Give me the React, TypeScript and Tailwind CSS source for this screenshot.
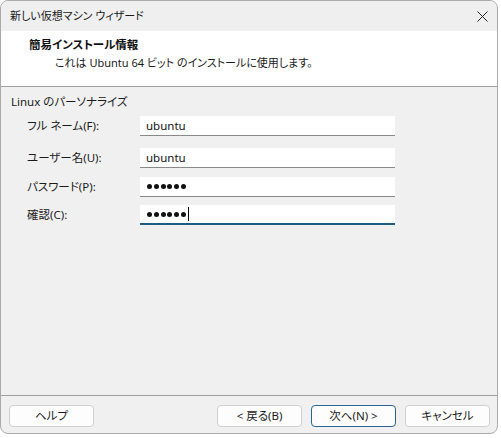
import React from "react";

const font = "font-['Noto_Sans','Noto_Sans_CJK_JP',sans-serif] [font-feature-settings:'palt']";

function Field({ label, children, className = "" }: { label: string; children: React.ReactNode; className?: string }) {
  return (
    <div className={`flex items-center ${className}`}>
      <div className="w-[139px] pl-[26px] text-[11.5px] leading-[16px] text-[#1a1a1a]">{label}</div>
      {children}
    </div>
  );
}

function Dots() {
  return (
    <div className="flex items-center gap-[1.8px]">
      {[0, 1, 2, 3, 4, 5].map((i) => (
        <span key={i} className="block w-[5px] h-[5px] rounded-full bg-[#111]" />
      ))}
    </div>
  );
}

function Btn({ children, primary = false }: { children: React.ReactNode; primary?: boolean }) {
  return (
    <button
      className={`w-[85px] h-[22px] rounded-[4px] bg-[#fdfdfd] text-[11.5px] leading-[16px] text-[#1a1a1a] border ${
        primary ? "border-[#2a6394]" : "border-[#d0d0d0]"
      }`}
    >
      {children}
    </button>
  );
}

export default function App() {
  return (
    <div className={`w-[501px] h-[438px] bg-white relative overflow-hidden ${font}`}>
      <div className="w-[498px] h-[434px] rounded-[8px] border border-[#aaaaaa] bg-[#f0f0f0] overflow-hidden flex flex-col">
        {/* title bar */}
        <div className="h-[30px] flex items-center justify-between pl-[9px] pr-[8px] bg-[#efefef]">
          <span className="text-[11px] leading-[16px] text-[#1a1a1a]">新しい仮想マシン ウィザード</span>
          <svg width="11" height="11" viewBox="0 0 11 11" className="mr-[1px]">
            <path d="M0.5 0.5 L10.5 10.5 M10.5 0.5 L0.5 10.5" stroke="#222" strokeWidth="1" />
          </svg>
        </div>
        {/* header */}
        <div className="h-[56px] bg-white border-b border-[#a0a0a0] pl-[28px] pt-[6px]">
          <div className="text-[11.5px] leading-[16px] font-bold text-[#111]">簡易インストール情報</div>
          <div className="pl-[26px] mt-[2px] text-[11px] leading-[16px] text-[#1a1a1a]">
            これは Ubuntu 64 ビット のインストールに使用します。
          </div>
        </div>
        {/* body */}
        <div className="flex-1 pt-[7px]">
          <div className="pl-[10px] text-[11.5px] leading-[16px] text-[#1a1a1a]">Linux のパーソナライズ</div>
          <Field label="フル ネーム(F):" className="mt-[6px]">
            <div className="w-[255px] h-[20px] bg-white border-b border-[#8a8a8a] pl-[6px] flex items-center text-[11.5px] text-[#111]">
              ubuntu
            </div>
          </Field>
          <Field label="ユーザー名(U):" className="mt-[12px]">
            <div className="w-[255px] h-[20px] bg-white border-b border-[#8a8a8a] pl-[6px] flex items-center text-[11.5px] text-[#111]">
              ubuntu
            </div>
          </Field>
          <Field label="パスワード(P):" className="mt-[9px]">
            <div className="w-[255px] h-[20px] bg-white border-b border-[#8a8a8a] pl-[7px] flex items-center">
              <Dots />
            </div>
          </Field>
          <Field label="確認(C):" className="mt-[8px]">
            <div className="w-[255px] h-[20px] bg-white border-b-2 border-[#1e5b85] pl-[7px] flex items-center">
              <Dots />
              <span className="block w-[1px] h-[14px] bg-black ml-[2px]" />
            </div>
          </Field>
        </div>
        {/* footer */}
        <div className="h-[38px] border-t border-[#a0a0a0] flex items-start pt-[9px] pl-[8px] pr-[7px]">
          <Btn>ヘルプ</Btn>
          <div className="flex-1" />
          <div className="flex gap-[9px]">
            <Btn>&lt; 戻る(B)</Btn>
            <Btn primary>次へ(N) &gt;</Btn>
            <Btn>キャンセル</Btn>
          </div>
        </div>
      </div>
    </div>
  );
}
